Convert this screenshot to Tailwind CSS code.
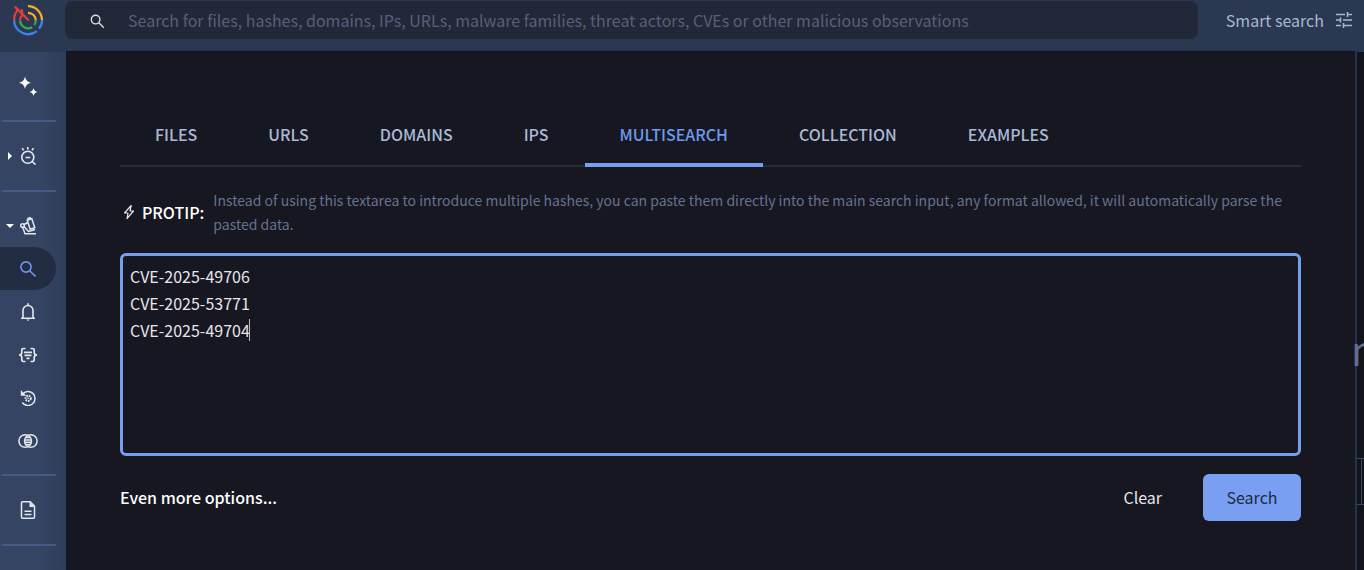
<!DOCTYPE html>
<html lang="en">
<head>
<meta charset="utf-8">
<title>Multisearch</title>
<script src="https://cdn.jsdelivr.net/npm/@tailwindcss/browser@4"></script>
</head>
<body class="flex h-screen flex-col overflow-hidden bg-[#13151d] font-['Noto_Sans_CJK_SC','Noto_Sans',sans-serif] text-base text-[#e6e6ea]">
<header class="flex h-[50px] shrink-0 items-start bg-[#2a3852]">
  <a href="#" aria-label="Home" class="flex h-10 w-[65px] shrink-0 items-center pl-3">
    <svg class="size-8" viewBox="0 4 32 32" fill="none" stroke-width="2.3">
      <path d="M16 6.200A14 14 0 0 1 30 20" stroke="#f9ab2b"/>
      <path d="M16 12.800A7.600 7.600 0 0 1 23.800 20.500" stroke="#f9ab2b"/>
      <path d="M30 20A14 14 0 0 1 27 28.800M24.800 31.100A14 14 0 0 1 2.200 20.200" stroke="#3d82ee"/>
      <path d="M23.800 20.500A8 8 0 0 1 22.300 25M20.300 27.200A8 8 0 0 1 8.200 20.500" stroke="#34a853"/>
      <path d="M2.800 6.600 16.800 20.500M6 9.800A14 14 0 0 0 2.200 20.200M10.500 14.500A8 8 0 0 0 8.200 20.500M10.200 14.200 9.800 9.200" stroke="#e63b36"/>
    </svg>
  </a>
  <label class="mt-px flex h-[38px] grow items-center rounded-lg bg-[#212837] pl-6">
    <svg class="mt-1 size-4 shrink-0" viewBox="0 0 16 16" fill="none" stroke="#d4dae6" stroke-width="1.4"><circle cx="6.6" cy="5.6" r="4.3"/><path d="m9.8 8.8 5 5"/></svg>
    <input type="text" aria-label="Search" placeholder="Search for files, hashes, domains, IPs, URLs, malware families, threat actors, CVEs or other malicious observations" class="ml-[23px] h-full min-w-0 grow bg-transparent text-base outline-none placeholder:text-[#55617a]">
  </label>
  <button class="ml-7 mr-3 flex h-10 shrink-0 items-center gap-3 text-[#a9b7d1]">Smart search
    <svg class="size-4" viewBox="0 0 16 16" fill="none" stroke="currentColor" stroke-width="1.6"><path d="M0 2.5h9M11.5 2.5H16M11.5 0v5M0 8h4.5M4.5 5.5v5M7 8h9M0 13.5h5M7.5 13.5H16M7.5 11v5"/></svg>
  </button>
</header>
<div class="flex min-h-0 grow">
  <nav aria-label="Main" class="flex w-[66px] shrink-0 flex-col border-t-2 border-[#2a3852] bg-linear-to-r from-[#344462] from-60% to-[#2e3d59] text-[#e3e7ef]">
    <a href="#" aria-label="Assistant" class="flex h-[68px] w-14 items-center justify-center">
      <svg class="size-5" viewBox="0 0 20 20" fill="#fff"><path d="M7 .5Q7.900 6 13 6.800 7.900 7.600 7 13 6.100 7.600 1 6.800 6.100 6 7 .5ZM15.500 12Q16.200 15.300 19.500 16 16.200 16.700 15.500 20 14.800 16.700 11.500 16 14.800 15.300 15.500 12Z"/></svg>
    </a>
    <hr class="ml-0.5 w-[54px] border-t-2 border-[#465b83]">
    <a href="#" aria-label="Threat hunting" class="flex h-[68px] w-14 items-center pl-2">
      <svg class="h-2 w-1 shrink-0" viewBox="0 0 4 8" fill="#fff"><path d="m0 0 4 4-4 4Z"/></svg>
      <svg class="ml-2 h-[18px] w-4" viewBox="0 0 16 18" fill="none" stroke="currentColor" stroke-width="1.600"><circle cx="7.800" cy="10.200" r="6"/><path d="M5.500 10.500h4.600M12 14.400 15.600 17.600M7.800 0v2.500M2.200 1.200l1.300 2.200M13.400 1.200l-1.300 2.200"/></svg>
    </a>
    <hr class="ml-0.5 w-[54px] border-t-2 border-[#465b83]">
    <div class="flex flex-col py-3">
      <a href="#" aria-label="Intelligence" class="flex h-[43px] w-14 items-center pl-1.5">
        <svg class="h-1 w-2 shrink-0" viewBox="0 0 8 4" fill="#fff"><path d="M0 0h8L4 4Z"/></svg>
        <svg class="ml-1.5 h-[18px] w-4" viewBox="0 0 16 18" fill="none" stroke="currentColor" stroke-width="1.500"><circle cx="2.500" cy="8.500" r="1.800"/><path d="m7.200 3.200 4.600-1.500 3 9-4.600 1.600ZM8.300 2.800 7.900 1.400l2.400-.8.5 1.400M4 7.500l3.800-2M2.800 10.500 5 16.700H16M4 9.500l4.500 5 5.700-1.500V11"/></svg>
      </a>
      <a href="#" aria-label="Search" aria-current="page" class="flex h-[43px] w-14 items-center justify-center rounded-r-full bg-[#222d43] text-[#6e95e8]">
        <svg class="size-4" viewBox="0 0 16 16" fill="none" stroke="currentColor" stroke-width="1.600"><circle cx="6" cy="6" r="5.100"/><path d="m9.700 9.700 5.800 5.800"/></svg>
      </a>
      <a href="#" aria-label="Notifications" class="flex h-[43px] w-14 items-center justify-center">
        <svg class="h-[18px] w-4" viewBox="0 0 16 18" fill="none" stroke="currentColor" stroke-width="1.600"><path d="M1 15.200h14M3 15V7.500a5 5 0 0 1 10 0V15M8 .2v2.200"/><path d="M6.300 16.500h3.400L8 18Z" fill="currentColor" stroke="none"/></svg>
      </a>
      <a href="#" aria-label="Rules" class="flex h-[43px] w-14 items-center justify-center">
        <svg class="h-4 w-[18px]" viewBox="0 0 18 16" fill="none" stroke="currentColor" stroke-width="1.700"><path d="M6.500 1.500H4.500Q2.800 1.500 2.800 3v2.500Q2.800 8 0 8 2.800 8 2.800 10.500V13q0 1.500 1.700 1.500H6.500M11.500 1.500h2Q15.200 1.500 15.200 3v2.500Q15.200 8 18 8 15.200 8 15.200 10.500V13q0 1.500-1.700 1.500H11.500M5 5.300h8M5.500 8.300h7M7.500 11.300h3"/></svg>
      </a>
      <a href="#" aria-label="Retrohunt" class="flex h-[43px] w-14 items-center justify-center">
        <svg class="size-4" viewBox="0 0 16 16" fill="none" stroke="currentColor" stroke-width="1.500"><path d="M2.500 4.200A7 7 0 1 1 2.300 12.500"/><path d="M.8 0v5.800h5.500Z" fill="currentColor" stroke="none"/><circle cx="8.200" cy="8.300" r="2.600" stroke-width="2" stroke-dasharray="1.700 .8"/><circle cx="8.200" cy="8.300" r=".8" fill="currentColor" stroke="none"/></svg>
      </a>
      <a href="#" aria-label="Diff" class="flex h-[43px] w-14 items-center justify-center">
        <svg class="h-4 w-5" viewBox="0 0 20 16" fill="none" stroke="currentColor" stroke-width="1.500"><circle cx="7.200" cy="8" r="6.300"/><circle cx="12.800" cy="8" r="6.300"/><path d="M8 4.500h4M7 6.900h6M7 9.200h6M8 11.500h4"/></svg>
      </a>
    </div>
    <hr class="ml-0.5 w-[54px] border-t-2 border-[#465b83]">
    <a href="#" aria-label="Reports" class="flex h-[68px] w-14 items-center justify-center">
      <svg class="h-[18px] w-4" viewBox="0 0 16 18" fill="none" stroke="currentColor" stroke-width="1.500"><path d="M2.500.8h7.700l4.300 4.300v11.100q0 1-1 1h-11q-1 0-1-1V1.800q0-1 1-1ZM4.500 10.200h7M4.500 13.600h7"/><path d="M9.500 1v5h5Z" fill="currentColor" stroke="none"/></svg>
    </a>
    <hr class="ml-0.5 w-[54px] border-t-2 border-[#465b83]">
  </nav>
  <main class="flex min-w-0 grow flex-col border-r-2 border-t border-[#27334b] bg-[#171721] pl-[54px] pr-[54px] pt-[52px]">
    <div role="tablist" class="flex h-16 shrink-0 gap-px border-b-2 border-[#222c42] font-medium text-[#a9b9d6]">
      <button role="tab" class="px-[35px]">FILES</button>
      <button role="tab" class="px-[35px]">URLS</button>
      <button role="tab" class="px-[35px]">DOMAINS</button>
      <button role="tab" class="px-[35px]">IPS</button>
      <button role="tab" aria-selected="true" class="-mb-0.5 border-b-4 border-[#769ff0] px-[35px] pt-0.5 text-[#6f98ee]">MULTISEARCH</button>
      <button role="tab" class="px-[35px]">COLLECTION</button>
      <button role="tab" class="px-[35px]">EXAMPLES</button>
    </div>
    <div class="mt-[21px] flex items-center">
      <svg class="ml-[3px] h-4 w-3 shrink-0" viewBox="0 0 12 16" fill="none" stroke="#e6e6ea" stroke-width="1.200" stroke-linejoin="round"><path d="M8.200 1.500 1.500 9h3.500L4 14.500 10.500 7H7Z"/></svg>
      <strong class="ml-[7px] font-medium text-white">PROTIP:</strong>
      <p class="ml-[9px] text-sm/6 text-[#65728f]">Instead of using this textarea to introduce multiple hashes, you can paste them directly into the main search input, any format allowed, it will automatically parse the pasted data.</p>
    </div>
    <div class="relative mt-[17px]">
      <textarea aria-label="Multisearch" spellcheck="false" class="block h-[203px] w-full resize-none rounded-md border-3 border-[#769ff0] bg-transparent px-[7px] py-[7px] text-base/[27px] text-[#e6e6ea] outline-none">CVE-2025-49706
CVE-2025-53771
CVE-2025-49704</textarea>
      <span aria-hidden="true" class="absolute left-[129px] top-[66px] h-[22px] w-px bg-[#b9b9c0]"></span>
    </div>
    <div class="mt-[18px] flex h-[47px] shrink-0 items-stretch">
      <div class="flex grow items-center pb-0.5"><a href="#" class="font-medium text-white">Even more options...</a></div>
      <button class="px-[41px] pb-0.5">Clear</button>
      <button class="w-[98px] rounded-md bg-[#789ff2] pb-0.5 text-[#20293f]">Search</button>
    </div>
  </main>
  <aside class="relative w-[7px] shrink-0 border-t-2 border-[#2a3852] bg-[#12141c]">
    <span class="absolute -left-1.5 top-[271px] text-[40px]/[52px] text-[#5f6f8e]">n</span>
    <span class="absolute left-0 top-[406px] h-[47px] w-2 border-y border-[#384763]"></span>
    <span class="absolute left-[4px] top-[407px] h-[45px] w-px bg-[#384763]"></span>
  </aside>
</div>
</body>
</html>
